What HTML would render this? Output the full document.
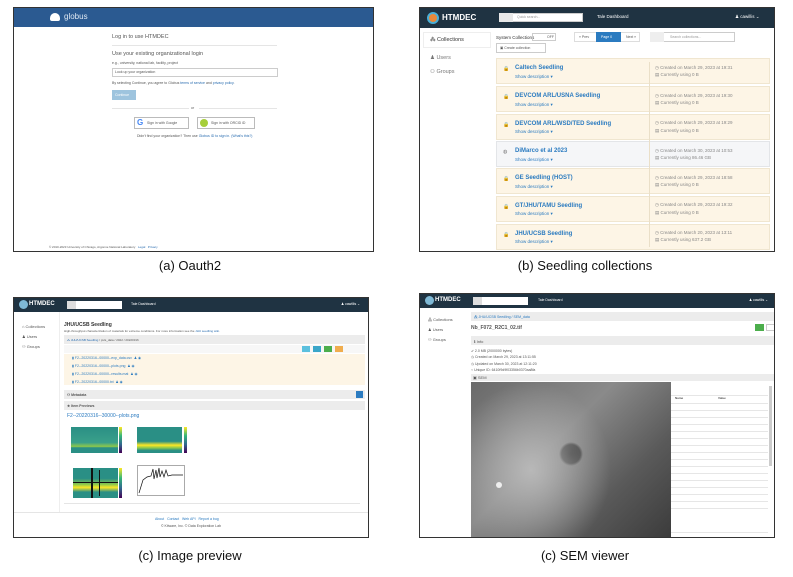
<!DOCTYPE html>
<html><head><meta charset="utf-8"><style>
*{box-sizing:border-box;margin:0;padding:0}
body{width:793px;height:577px;background:#fff;position:relative;overflow:hidden;font-family:"Liberation Sans",sans-serif;color:#333}
.a{position:absolute}
.f{position:absolute;border:1px solid #333;background:#fff;overflow:hidden}
.cap{position:absolute;font-size:13px;color:#111;text-align:center;width:300px}
.t{position:absolute;font-size:4px;white-space:nowrap;color:#555}
.lnk{color:#2a6db0}
.dk{background:#1f3342}
.row{position:absolute;background:#fdf5e6;border:1px solid #f0e6d0}
.ttl{position:absolute;font-size:6px;font-weight:bold;color:#2b7bc0;white-space:nowrap}
.sd{position:absolute;font-size:4.5px;color:#2b7bc0;white-space:nowrap}
.mt{position:absolute;font-size:4.5px;color:#888;white-space:nowrap}
.bar{position:absolute;background:#ececec}
.tr{position:absolute;height:7px;border-bottom:1px solid #e6e6e6}
</style></head><body>

<!-- (a) -->
<div class="f" style="left:13px;top:7px;width:361px;height:245px">
 <div class="a" style="left:0;top:0;width:361px;height:19px;background:#2b5a91"></div>
 <div class="a" style="left:36px;top:5px;width:10px;height:8px;border-radius:5px 5px 2px 2px;background:#fff"></div>
 <div class="t" style="left:50px;top:4px;font-size:8px;color:#dfe8f3">globus</div>
 <div class="t" style="left:98px;top:26px;font-size:5.5px;color:#555">Log in to use HTMDEC</div>
 <div class="a" style="left:98px;top:37px;width:165px;height:1px;background:#e5e5e5"></div>
 <div class="t" style="left:98px;top:43px;font-size:5.5px">Use your existing organizational login</div>
 <div class="t" style="left:98px;top:53px;font-size:3.5px">e.g., university, national lab, facility, project</div>
 <div class="a" style="left:98px;top:60px;width:166px;height:9px;border:1px solid #ccc"></div>
 <div class="t" style="left:101px;top:62px;font-size:3.5px">Look up your organization</div>
 <div class="t" style="left:98px;top:73px;font-size:3.5px">By selecting Continue, you agree to Globus <span class="lnk">terms of service</span> and <span class="lnk">privacy policy</span>.</div>
 <div class="a" style="left:98px;top:82px;width:24px;height:10px;background:#9ec4de"></div>
 <div class="t" style="left:101px;top:85px;font-size:3.5px;color:#fff">Continue</div>
 <div class="a" style="left:98px;top:100px;width:165px;height:1px;background:#e5e5e5"></div>
 <div class="a" style="left:175px;top:98px;width:10px;height:5px;background:#fff"></div>
 <div class="t" style="left:177px;top:98px;font-size:3.5px">or</div>
 <div class="a" style="left:120px;top:109px;width:55px;height:12px;border:1px solid #bbb"></div>
 <div class="t" style="left:123px;top:110px;font-size:8px;color:#4285f4;font-weight:bold">G</div>
 <div class="t" style="left:133px;top:113px;font-size:3.5px">Sign in with Google</div>
 <div class="a" style="left:183px;top:109px;width:58px;height:12px;border:1px solid #bbb"></div>
 <div class="a" style="left:186px;top:111px;width:8px;height:8px;border-radius:50%;background:#a6ce39"></div>
 <div class="t" style="left:197px;top:113px;font-size:3.5px">Sign in with ORCID iD</div>
 <div class="t" style="left:123px;top:126px;font-size:3.5px">Didn't find your organization? Then use <span class="lnk">Globus ID to sign in. (What's this?)</span></div>
 <div class="t" style="left:35px;top:237px;font-size:3px">© 2010-2023 University of Chicago, Argonne National Laboratory &nbsp;&nbsp;<span class="lnk">Legal &nbsp; Privacy</span></div>
</div>
<div class="cap" style="left:40px;top:258px">(a) Oauth2</div>

<!-- (b) -->
<div class="f" style="left:419px;top:7px;width:356px;height:245px">
 <div class="a dk" style="left:0;top:0;width:356px;height:20px"></div>
 <div class="a" style="left:7px;top:4px;width:12px;height:12px;border-radius:50%;background:#e9893a;border:2px solid #4bb0d8"></div>
 <div class="t" style="left:22px;top:5px;font-size:8px;font-weight:bold;color:#fff">HTMDEC</div>
 <div class="a" style="left:79px;top:5px;width:84px;height:9px;background:#fff;border:1px solid #ccc"></div>
 <div class="a" style="left:79px;top:5px;width:14px;height:9px;background:#e8e8e8"></div>
 <div class="t" style="left:97px;top:7px;font-size:3.5px;color:#999">Quick search...</div>
 <div class="t" style="left:177px;top:6px;font-size:4.5px;color:#fff">Tale Dashboard</div>
 <div class="t" style="left:315px;top:6px;font-size:4.5px;color:#fff">♟ cawillis ⌄</div>
 <div class="a" style="left:3px;top:24px;width:68px;height:16px;border:1px solid #eee"></div>
 <div class="t" style="left:10px;top:29px;font-size:5.5px;color:#333">⁂ Collections</div>
 <div class="t" style="left:10px;top:47px;font-size:5.5px;color:#777">♟ Users</div>
 <div class="t" style="left:10px;top:61px;font-size:5.5px;color:#777">⚇ Groups</div>
 <div class="t" style="left:76px;top:27px;font-size:4.5px;color:#333">System Collections</div>
 <div class="a" style="left:112px;top:25px;width:24px;height:8px;border:1px solid #ccc"></div>
 <div class="t" style="left:127px;top:27px;font-size:3.5px">OFF</div>
 <div class="a" style="left:154px;top:24px;width:66px;height:10px;border:1px solid #ddd"></div>
 <div class="t" style="left:159px;top:27px;font-size:3.5px">« Prev</div>
 <div class="a" style="left:176px;top:24px;width:25px;height:10px;background:#2b7bc0"></div>
 <div class="t" style="left:181px;top:27px;font-size:3.5px;color:#fff">Page 0</div>
 <div class="t" style="left:206px;top:27px;font-size:3.5px">Next »</div>
 <div class="a" style="left:230px;top:24px;width:85px;height:10px;border:1px solid #ccc"></div>
 <div class="a" style="left:230px;top:24px;width:14px;height:10px;background:#eee"></div>
 <div class="t" style="left:250px;top:27px;font-size:3.5px;color:#999">Search collections...</div>
 <div class="a" style="left:76px;top:35px;width:50px;height:10px;border:1px solid #ccc"></div>
 <div class="t" style="left:80px;top:38px;font-size:3.5px">▣ Create collection</div>
 <div class="row" style="left:76px;top:50px;width:274px;height:26px"></div>
 <div class="row" style="left:76px;top:78px;width:274px;height:26px"></div>
 <div class="row" style="left:76px;top:106px;width:274px;height:26px"></div>
 <div class="row" style="left:76px;top:133px;width:274px;height:26px;background:#f5f6f8;border-color:#e3e5e8"></div>
 <div class="row" style="left:76px;top:160px;width:274px;height:26px"></div>
 <div class="row" style="left:76px;top:188px;width:274px;height:26px"></div>
 <div class="row" style="left:76px;top:216px;width:274px;height:26px"></div>
 <div class="a" style="left:229px;top:54px;width:1px;height:185px;background:#eadfc8"></div>
</div>
<div class="a" style="left:419px;top:7px;width:356px;height:245px">
 <div class="t" style="left:84px;top:59px;font-size:5px;color:#777">🔒</div>
 <div class="t" style="left:84px;top:87px;font-size:5px;color:#777">🔒</div>
 <div class="t" style="left:84px;top:115px;font-size:5px;color:#777">🔒</div>
 <div class="t" style="left:84px;top:142px;font-size:5px;color:#777">◍</div>
 <div class="t" style="left:84px;top:169px;font-size:5px;color:#777">🔒</div>
 <div class="t" style="left:84px;top:197px;font-size:5px;color:#777">🔒</div>
 <div class="t" style="left:84px;top:225px;font-size:5px;color:#777">🔒</div>
 <div class="ttl" style="left:96px;top:58px">Caltech Seedling</div><div class="sd" style="left:96px;top:67px">Show description ▾</div>
 <div class="mt" style="left:236px;top:58px">◷ Created on March 29, 2023 at 19:31</div><div class="mt" style="left:236px;top:65px">▤ Currently using 0 B</div>
 <div class="ttl" style="left:96px;top:86px">DEVCOM ARL/USNA Seedling</div><div class="sd" style="left:96px;top:95px">Show description ▾</div>
 <div class="mt" style="left:236px;top:86px">◷ Created on March 29, 2023 at 19:30</div><div class="mt" style="left:236px;top:93px">▤ Currently using 0 B</div>
 <div class="ttl" style="left:96px;top:114px">DEVCOM ARL/WSD/TED Seedling</div><div class="sd" style="left:96px;top:122px">Show description ▾</div>
 <div class="mt" style="left:236px;top:113px">◷ Created on March 29, 2023 at 19:29</div><div class="mt" style="left:236px;top:121px">▤ Currently using 0 B</div>
 <div class="ttl" style="left:96px;top:141px">DiMarco et al 2023</div><div class="sd" style="left:96px;top:150px">Show description ▾</div>
 <div class="mt" style="left:236px;top:141px">◷ Created on March 30, 2023 at 10:53</div><div class="mt" style="left:236px;top:148px">▤ Currently using 86.46 GB</div>
 <div class="ttl" style="left:96px;top:168px">GE Seedling (HOST)</div><div class="sd" style="left:96px;top:177px">Show description ▾</div>
 <div class="mt" style="left:236px;top:168px">◷ Created on March 29, 2023 at 18:58</div><div class="mt" style="left:236px;top:175px">▤ Currently using 0 B</div>
 <div class="ttl" style="left:96px;top:196px">GT/JHU/TAMU Seedling</div><div class="sd" style="left:96px;top:204px">Show description ▾</div>
 <div class="mt" style="left:236px;top:195px">◷ Created on March 29, 2023 at 19:32</div><div class="mt" style="left:236px;top:203px">▤ Currently using 0 B</div>
 <div class="ttl" style="left:96px;top:224px">JHU/UCSB Seedling</div><div class="sd" style="left:96px;top:232px">Show description ▾</div>
 <div class="mt" style="left:236px;top:223px">◷ Created on March 20, 2023 at 13:11</div><div class="mt" style="left:236px;top:230px">▤ Currently using 637.2 GB</div>
</div>
<div class="cap" style="left:435px;top:258px">(b) Seedling collections</div>

<!-- (c) -->
<div class="f" style="left:13px;top:297px;width:356px;height:241px">
 <div class="a dk" style="left:0;top:0;width:356px;height:14px"></div>
 <div class="a" style="left:5px;top:2px;width:9px;height:9px;border-radius:50%;background:#7fb9d6"></div>
 <div class="t" style="left:15px;top:3px;font-size:6px;font-weight:bold;color:#fff">HTMDEC</div>
 <div class="a" style="left:53px;top:3px;width:55px;height:8px;background:#fff"></div>
 <div class="a" style="left:53px;top:3px;width:9px;height:8px;background:#ddd"></div>
 <div class="t" style="left:117px;top:4px;font-size:3.5px;color:#fff">Tale Dashboard</div>
 <div class="t" style="left:327px;top:4px;font-size:3.5px;color:#fff">♟ cawillis ⌄</div>
 <div class="a" style="left:45px;top:14px;width:1px;height:200px;background:#eee"></div>
 <div class="t" style="left:8px;top:26px;font-size:4px">⌂ Collections</div>
 <div class="t" style="left:8px;top:36px;font-size:4px">♟ Users</div>
 <div class="t" style="left:8px;top:46px;font-size:4px">⚇ Groups</div>
 <div class="t" style="left:50px;top:24px;font-size:5px;font-weight:bold;color:#333">JHU/UCSB Seedling</div>
 <div class="t" style="left:50px;top:31px;font-size:3px">High-throughput characterization of materials for extreme conditions. For more information see the <span class="lnk">JHU seedling wiki</span>.</div>
 <div class="bar" style="left:50px;top:37px;width:301px;height:9px"></div>
 <div class="t" style="left:53px;top:40px;font-size:3px"><span class="lnk">⁂ JHU/UCSB Seedling</span> / pvls_data / 2022 / 20220316</div>
 <div class="a" style="left:50px;top:47px;width:301px;height:8px;background:#f7f7f7"></div>
 <div class="a" style="left:288px;top:48px;width:8px;height:6px;background:#5bc0de"></div>
 <div class="a" style="left:299px;top:48px;width:8px;height:6px;background:#3aa6c9"></div>
 <div class="a" style="left:310px;top:48px;width:8px;height:6px;background:#4cae4c"></div>
 <div class="a" style="left:321px;top:48px;width:8px;height:6px;background:#f0ad4e"></div>
 <div class="a" style="left:50px;top:56px;width:301px;height:31px;background:#fdf5e6"></div>
 <div class="t" style="left:58px;top:58px;font-size:3.5px;color:#2b7bc0">▮ F2--20220316--00000--exp_data.csv &nbsp;♟ ◉</div>
 <div class="t" style="left:58px;top:66px;font-size:3.5px;color:#2b7bc0">▮ F2--20220316--00000--plots.png &nbsp;♟ ◉</div>
 <div class="t" style="left:58px;top:74px;font-size:3.5px;color:#2b7bc0">▮ F2--20220316--00000--results.mat &nbsp;♟ ◉</div>
 <div class="t" style="left:58px;top:82px;font-size:3.5px;color:#2b7bc0">▮ F2--20220316--00000.txt &nbsp;♟ ◉</div>
 <div class="bar" style="left:50px;top:92px;width:301px;height:9px"></div>
 <div class="t" style="left:53px;top:95px;font-size:3.5px;font-weight:bold">⚇ Metadata</div>
 <div class="a" style="left:342px;top:93px;width:7px;height:7px;background:#2b7bc0"></div>
 <div class="bar" style="left:50px;top:103px;width:301px;height:9px"></div>
 <div class="t" style="left:53px;top:106px;font-size:3.5px;font-weight:bold">★ Item Previews</div>
 <div class="t" style="left:53px;top:115px;font-size:5px;color:#2b7bc0">F2--20220316--30000--plots.png</div>
 <div class="a" style="left:57px;top:129px;width:47px;height:26px;background:linear-gradient(#2a8f85,#3aa08a 60%,#8fc94a 75%,#2a8f85 80%)"></div>
 <div class="a" style="left:105px;top:129px;width:3px;height:26px;background:linear-gradient(#fde725,#35b779,#31688e,#440154)"></div>
 <div class="a" style="left:123px;top:129px;width:45px;height:26px;background:linear-gradient(#2a8f85 55%,#fde725 70%,#8fc94a 80%,#2a8f85 90%)"></div>
 <div class="a" style="left:170px;top:129px;width:3px;height:26px;background:linear-gradient(#fde725,#35b779,#31688e,#440154)"></div>
 <div class="a" style="left:59px;top:170px;width:45px;height:30px;background:linear-gradient(#2a8f85 35%,#8fc94a 55%,#fde725 65%,#2a8f85 80%)"></div>
 <div class="a" style="left:77px;top:170px;width:2px;height:30px;background:#111"></div>
 <div class="a" style="left:85px;top:172px;width:1px;height:26px;background:#111"></div>
 <div class="a" style="left:59px;top:184px;width:45px;height:1px;background:#111"></div>
 <div class="a" style="left:105px;top:170px;width:3px;height:30px;background:linear-gradient(#fde725,#35b779,#31688e,#440154)"></div>
 <div class="a" style="left:123px;top:167px;width:48px;height:31px;border:1px solid #aaa;background:#fff"></div>
 <svg class="a" style="left:123px;top:167px" width="48" height="31"><polyline fill="none" stroke="#111" stroke-width=".7" points="2,28 6,15 10,12 14,11 16,4 17,14 19,5 20,13 22,3 23,12 25,6 27,12 29,5 31,11 35,10 40,10 46,10"/></svg>
 <div class="a" style="left:50px;top:205px;width:296px;height:1px;background:#e5e5e5"></div>
 <div class="a" style="left:0;top:214px;width:356px;height:1px;background:#e5e5e5"></div>
 <div class="t" style="left:141px;top:219px;font-size:3.5px;color:#2b7bc0">About &nbsp; Contact &nbsp; Web API &nbsp; Report a bug</div>
 <div class="t" style="left:147px;top:226px;font-size:3.5px">© Kitware, Inc. © Data Exploration Lab</div>
</div>
<div class="cap" style="left:40px;top:548px">(c) Image preview</div>

<!-- (d) -->
<div class="f" style="left:419px;top:293px;width:356px;height:245px">
 <div class="a dk" style="left:0;top:0;width:356px;height:14px"></div>
 <div class="a" style="left:5px;top:2px;width:9px;height:9px;border-radius:50%;background:#7fb9d6"></div>
 <div class="t" style="left:15px;top:3px;font-size:6px;font-weight:bold;color:#fff">HTMDEC</div>
 <div class="a" style="left:53px;top:3px;width:55px;height:8px;background:#fff"></div>
 <div class="a" style="left:53px;top:3px;width:9px;height:8px;background:#ddd"></div>
 <div class="t" style="left:118px;top:4px;font-size:3.5px;color:#fff">Tale Dashboard</div>
 <div class="t" style="left:329px;top:4px;font-size:3.5px;color:#fff">♟ cawillis ⌄</div>
 <div class="t" style="left:8px;top:23px;font-size:4px">⁂ Collections</div>
 <div class="t" style="left:8px;top:33px;font-size:4px">♟ Users</div>
 <div class="t" style="left:8px;top:43px;font-size:4px">⚇ Groups</div>
 <div class="bar" style="left:51px;top:18px;width:305px;height:9px"></div>
 <div class="t" style="left:54px;top:21px;font-size:3.5px;color:#2b7bc0">⁂ JHU/UCSB Seedling / SEM_data</div>
 <div class="t" style="left:51px;top:31px;font-size:5px;font-weight:bold">Nb_F072_R2C1_02.tif</div>
 <div class="a" style="left:335px;top:30px;width:9px;height:7px;background:#4cae4c"></div>
 <div class="a" style="left:346px;top:30px;width:14px;height:7px;border:1px solid #ccc"></div>
 <div class="bar" style="left:51px;top:42px;width:305px;height:9px"></div>
 <div class="t" style="left:54px;top:45px;font-size:4px">ℹ Info</div>
 <div class="t" style="left:51px;top:55px;font-size:3.5px">⇙ 2.0 MB (2000000 bytes)</div>
 <div class="t" style="left:51px;top:61px;font-size:3.5px">◷ Created on March 29, 2023 at 13:11:55</div>
 <div class="t" style="left:51px;top:68px;font-size:3.5px">◷ Updated on March 30, 2023 at 12:11:20</div>
 <div class="t" style="left:51px;top:74px;font-size:3.5px">⌁ Unique ID: 6410f9d9f03356b0370aa8fa</div>
 <div class="bar" style="left:51px;top:80px;width:305px;height:7px"></div>
 <div class="t" style="left:53px;top:81px;font-size:4px">▣ SEM</div>
 <div class="a" style="left:51px;top:88px;width:200px;height:160px;background:radial-gradient(ellipse 40% 55% at 30% 55%,#b8b8b8,transparent),radial-gradient(circle at 50% 45%,#1a1a1a 0,#2a2a2a 7%,transparent 9%),linear-gradient(135deg,#6a6a6a,#8a8a8a 40%,#5a5a5a 70%,#3a3a3a)"></div>
 <div class="a" style="left:76px;top:188px;width:6px;height:6px;border-radius:50%;background:#eee"></div>
 <div class="a" style="left:251px;top:88px;width:105px;height:160px;background:#fff"></div>
 <div class="tr" style="left:251px;top:95px;width:97px"></div>
 <div class="t" style="left:255px;top:102px;font-size:3px;font-weight:bold">Name</div><div class="t" style="left:298px;top:102px;font-size:3px;font-weight:bold">Value</div>
 <div class="tr" style="left:251px;top:103px;width:97px"></div><div class="tr" style="left:251px;top:110px;width:97px"></div><div class="tr" style="left:251px;top:117px;width:97px"></div><div class="tr" style="left:251px;top:124px;width:97px"></div><div class="tr" style="left:251px;top:131px;width:97px"></div><div class="tr" style="left:251px;top:138px;width:97px"></div><div class="tr" style="left:251px;top:145px;width:97px"></div><div class="tr" style="left:251px;top:152px;width:97px"></div><div class="tr" style="left:251px;top:159px;width:97px"></div><div class="tr" style="left:251px;top:166px;width:97px"></div><div class="tr" style="left:251px;top:173px;width:97px"></div><div class="tr" style="left:251px;top:180px;width:97px"></div><div class="tr" style="left:251px;top:187px;width:97px"></div><div class="tr" style="left:251px;top:194px;width:97px"></div><div class="tr" style="left:251px;top:201px;width:97px"></div><div class="tr" style="left:251px;top:208px;width:97px"></div>
 <div class="tr" style="left:251px;top:232px;width:97px"></div><div class="tr" style="left:251px;top:239px;width:97px"></div>
 <div class="a" style="left:349px;top:92px;width:3px;height:80px;background:#ccc"></div>
</div>
<div class="cap" style="left:435px;top:548px">(c) SEM viewer</div>
</body></html>
